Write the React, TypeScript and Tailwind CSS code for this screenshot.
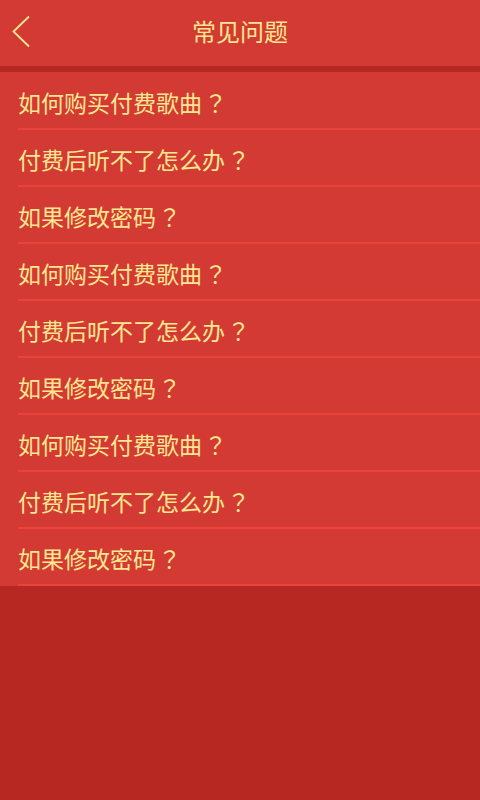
import React from "react";

const questions = [
  "如何购买付费歌曲",
  "付费后听不了怎么办",
  "如果修改密码",
  "如何购买付费歌曲",
  "付费后听不了怎么办",
  "如果修改密码",
  "如何购买付费歌曲",
  "付费后听不了怎么办",
  "如果修改密码",
];

const font = { fontFamily: '"Noto Sans CJK SC", "Noto Sans", sans-serif' };
// JP cut centres the full-width question mark like the reference
const qmark = { fontFamily: '"Noto Sans CJK JP", sans-serif' };

export default function App() {
  return (
    <div className="min-h-[800px] w-[480px] bg-[#b62821] text-[#fde78f]" style={font}>
      {/* Top bar */}
      <div className="relative flex h-[66px] items-center justify-center bg-[#d33a34] pb-[4px]">
        <button className="absolute left-[11px] top-[15px] p-0" aria-label="返回">
          <svg width="20" height="33" viewBox="0 0 20 33" fill="none">
            <path d="M18 1.5 L2.5 16.5 L18 31.5" stroke="#fde78f" strokeWidth="1.8" />
          </svg>
        </button>
        <h1 className="text-[24px] leading-none font-normal">常见问题</h1>
      </div>
      <div className="h-[6px] bg-[#b62821]" />

      {/* Question list */}
      <div className="bg-[#d33a34] pt-[1px]">
        {questions.map((q, i) => (
          <div key={i} className="pl-[18px]">
            <div className="flex h-[57px] items-center border-b-2 border-[#eb423b] pt-[3px] text-[23px] leading-none">
              {q}
              <span className="ml-[2px]" style={qmark}>？</span>
            </div>
          </div>
        ))}
      </div>
    </div>
  );
}
